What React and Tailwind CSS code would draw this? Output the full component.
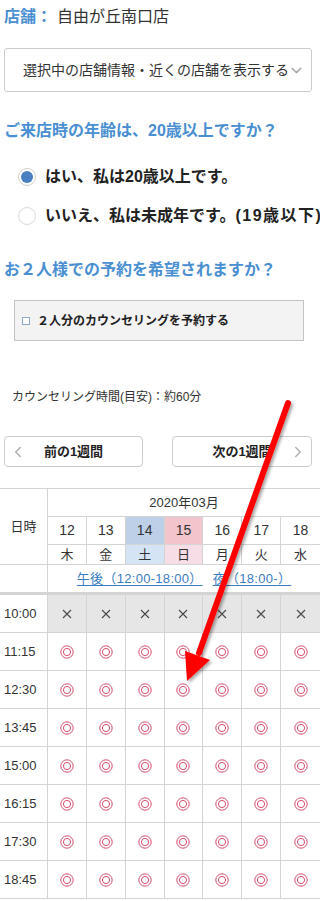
import React from "react";
import { ChevronDown, ChevronLeft, ChevronRight } from "lucide-react";

const FONT = { fontFamily: '"Liberation Sans", "Noto Sans CJK JP", sans-serif' };

const days = [
  { d: "12", w: "木", db: "bg-white", wb: "bg-white" },
  { d: "13", w: "金", db: "bg-white", wb: "bg-white" },
  { d: "14", w: "土", db: "bg-[#bdd0e8]", wb: "bg-[#d5e4f4]" },
  { d: "15", w: "日", db: "bg-[#f2c5cd]", wb: "bg-[#f7dee6]" },
  { d: "16", w: "月", db: "bg-white", wb: "bg-white" },
  { d: "17", w: "火", db: "bg-white", wb: "bg-white" },
  { d: "18", w: "水", db: "bg-white", wb: "bg-white" },
];

const times = ["11:15", "12:30", "13:45", "15:00", "16:15", "17:30", "18:45"];

function DoubleCircle() {
  return (
    <svg width="14" height="14" viewBox="0 0 14 14">
      <circle cx="7" cy="7" r="6.2" fill="none" stroke="#d4506f" strokeWidth="1" />
      <circle cx="7" cy="7" r="3.6" fill="none" stroke="#d4506f" strokeWidth="1" />
    </svg>
  );
}

function Cross() {
  return (
    <svg width="10" height="10" viewBox="0 0 10 10">
      <path d="M1 1 L9 9 M9 1 L1 9" stroke="#4a4a4a" strokeWidth="1.1" fill="none" />
    </svg>
  );
}

export default function App() {
  return (
    <div className="relative w-[320px] h-[901px] overflow-hidden bg-white text-[#333]" style={FONT}>
      {/* store */}
      <div className="h-[33px] flex items-center pl-1 text-[16px] whitespace-nowrap">
        <span className="font-bold text-[#4a8fd1]">店舗：</span>
        <span className="ml-[5px]">自由が丘南口店</span>
      </div>

      {/* dropdown */}
      <div className="relative mt-[15px] ml-1 w-[308px] h-[44px] border border-[#cccccc] rounded-[3px] flex items-center justify-center text-[14px] text-[#333] whitespace-nowrap">
        <span className="pr-[4px]">選択中の店舗情報・近くの店舗を表示する</span>
        <ChevronDown className="absolute right-[6px] top-[13px]" size={17} color="#aaaaaa" strokeWidth={2} />
      </div>

      {/* heading 1 */}
      <div className="mt-[26px] h-[26px] flex items-center pl-1 text-[16px] font-bold text-[#4a8fd1] whitespace-nowrap">
        ご来店時の年齢は、20歳以上ですか？
      </div>

      {/* radios */}
      <div className="mt-[18px] h-[30px] flex items-center pl-[18px] whitespace-nowrap">
        <span className="w-[18px] h-[18px] rounded-full border border-[#cfcfcf] bg-white flex items-center justify-center shrink-0">
          <span className="w-[12px] h-[12px] rounded-full bg-[#4a80c2]" />
        </span>
        <span className="ml-[9px] text-[16px] font-bold text-[#222]">はい、私は20歳以上です。</span>
      </div>
      <div className="mt-[9px] h-[30px] flex items-center pl-[18px] whitespace-nowrap">
        <span className="w-[18px] h-[18px] rounded-full border border-[#d8d8d8] bg-white shrink-0" />
        <span className="ml-[9px] text-[16px] font-bold text-[#222]">
          いいえ、私は未成年です。<span className="tracking-[1.5px]">(19歳以下)</span>
        </span>
      </div>

      {/* heading 2 */}
      <div className="mt-[26px] h-[26px] flex items-center pl-1 text-[16px] font-bold text-[#4a8fd1] whitespace-nowrap">
        お２人様での予約を希望されますか？
      </div>

      {/* checkbox */}
      <div className="mt-[17px] ml-[14px] w-[290px] h-[41px] border border-[#c4c4c4] bg-[#f3f3f3] flex items-center pl-[7px] gap-[7px] whitespace-nowrap">
        <span className="w-[8px] h-[8px] border border-[#8ea8cc] bg-white shrink-0" />
        <span className="text-[12px] font-bold text-[#222]">２人分のカウンセリングを予約する</span>
      </div>

      {/* duration */}
      <div className="mt-[46px] h-[20px] flex items-center pl-[12px] text-[12px] text-[#333] whitespace-nowrap">
        カウンセリング時間(目安)：約60分
      </div>

      {/* week buttons */}
      <div className="mt-[29px] ml-1 w-[308px] h-[31px] flex justify-between">
        <div className="relative w-[139px] h-full border border-[#cccccc] rounded-[4px] flex items-center justify-center text-[13px] font-bold text-[#222]">
          <ChevronLeft className="absolute left-[4px] top-[6px]" size={18} color="#b0b0b0" strokeWidth={2} />
          前の1週間
        </div>
        <div className="relative w-[140px] h-full border border-[#cccccc] rounded-[4px] flex items-center justify-center text-[13px] font-bold text-[#222]">
          次の1週間
          <ChevronRight className="absolute right-[4px] top-[6px]" size={18} color="#b0b0b0" strokeWidth={2} />
        </div>
      </div>

      {/* table */}
      <div className="mt-[21px] w-[320px] border-t border-[#d4d4d4] grid grid-cols-[48px_repeat(7,minmax(0,1fr))] text-[#333]">
        <div className="row-span-3 border-r border-b border-[#d4d4d4] flex items-center justify-center text-[13px]">
          日時
        </div>
        <div className="col-span-7 h-[28px] border-b border-[#d4d4d4] flex items-center justify-center text-[13px]">
          2020年03月
        </div>
        {days.map((d, i) => (
          <div
            key={"d" + i}
            className={`h-[28px] border-b border-[#d4d4d4] ${i < 6 ? "border-r" : ""} ${d.db} flex items-center justify-center text-[14px]`}
          >
            {d.d}
          </div>
        ))}
        {days.map((d, i) => (
          <div
            key={"w" + i}
            className={`h-[20px] border-b border-[#d4d4d4] ${i < 6 ? "border-r" : ""} ${d.wb} flex items-center justify-center text-[13px]`}
          >
            {d.w}
          </div>
        ))}
        <div className="h-[30px] border-r border-b-[3px] border-[#d4d4d4]" />
        <div className="col-span-7 h-[30px] border-b-[3px] border-[#d4d4d4] flex items-center justify-center gap-[10px] text-[13px] text-[#3b7cc0] whitespace-nowrap">
          <span className="underline underline-offset-2 tracking-[0.3px]">午後（12:00-18:00）</span>
          <span className="underline underline-offset-2 tracking-[0.3px]">夜（18:00-）</span>
        </div>

        {/* 10:00 row */}
        <div className="h-[38px] border-r border-b border-[#d4d4d4] flex items-center pl-1 text-[13px]">10:00</div>
        {days.map((d, i) => (
          <div
            key={"x" + i}
            className={`h-[38px] border-b border-[#d4d4d4] ${i < 6 ? "border-r" : ""} bg-[#e6e6e6] flex items-center justify-center`}
          >
            <Cross />
          </div>
        ))}

        {times.map((t) => (
          <React.Fragment key={t}>
            <div className="h-[38px] border-r border-b border-[#d4d4d4] flex items-center pl-1 text-[13px]">{t}</div>
            {days.map((d, i) => (
              <div
                key={t + i}
                className={`h-[38px] border-b border-[#d4d4d4] ${i < 6 ? "border-r" : ""} bg-white flex items-center justify-center`}
              >
                <DoubleCircle />
              </div>
            ))}
          </React.Fragment>
        ))}
      </div>

      {/* red annotation arrow */}
      <svg className="absolute top-0 left-0 pointer-events-none" width="320" height="901" viewBox="0 0 320 901">
        <defs>
          <filter id="sh" x="-20%" y="-20%" width="140%" height="140%">
            <feDropShadow dx="2" dy="2" stdDeviation="1.5" floodColor="#000" floodOpacity="0.35" />
          </filter>
        </defs>
        <g filter="url(#sh)">
          <line x1="288" y1="403" x2="199" y2="653" stroke="#ff0000" strokeWidth="6" strokeLinecap="round" />
          <polygon points="185,651 210,660 187,681" fill="#ff0000" />
        </g>
      </svg>
    </div>
  );
}
